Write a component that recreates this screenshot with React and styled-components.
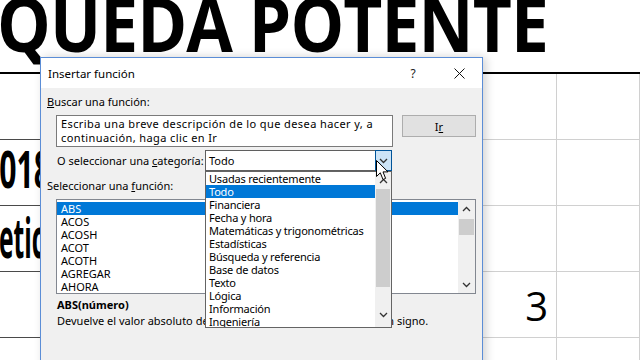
import React from "react";
import styled, { createGlobalStyle } from "styled-components";

const GlobalStyle = createGlobalStyle`
  html, body {
    margin: 0;
    padding: 0;
    background: #fff;
  }
  body {
    width: 640px;
    height: 360px;
    overflow: hidden;
    font-family: "Noto Sans", "Open Sans", sans-serif;
  }
`;

const categories = [
  "Usadas recientemente",
  "Todo",
  "Financiera",
  "Fecha y hora",
  "Matemáticas y trigonométricas",
  "Estadísticas",
  "Búsqueda y referencia",
  "Base de datos",
  "Texto",
  "Lógica",
  "Información",
  "Ingeniería",
];

const functions = ["ABS", "ACOS", "ACOSH", "ACOT", "ACOTH", "AGREGAR", "AHORA"];

function Chevron({ up }) {
  return (
    <svg width="9" height="6" viewBox="0 0 9 6">
      <path
        d={up ? "M1 5 L4.5 1.5 L8 5" : "M1 1 L4.5 4.5 L8 1"}
        fill="none"
        stroke="#333"
        strokeWidth="1.3"
      />
    </svg>
  );
}

function App() {
  return (
    <Page>
      <GlobalStyle />
      <Sheet>
        <Banner>
          <BannerText>QUEDA POTENTE</BannerText>
        </Banner>
        <Grid>
          <Cell $dark />
          <Cell />
          <Cell />
          <Cell $dark>
            <BigText $shift={-18} $size={52} $squeeze={0.58} $top={-10}>
              2018
            </BigText>
          </Cell>
          <Cell />
          <Cell />
          <Cell $dark>
            <BigText $shift={-1} $size={56} $squeeze={0.44} $top={-5}>
              etica
            </BigText>
          </Cell>
          <Cell />
          <Cell />
          <Cell $dark />
          <Cell $right>
            <Number>3</Number>
          </Cell>
          <Cell />
          <Cell $dark />
          <Cell />
          <Cell />
        </Grid>
      </Sheet>

      <Dialog>
        <TitleBar>
          <TitleText>Insertar función</TitleText>
          <HelpButton>?</HelpButton>
          <CloseButton>
            <svg width="11" height="11" viewBox="0 0 11 11">
              <path d="M0.5 0.5 L10.5 10.5 M10.5 0.5 L0.5 10.5" stroke="#111" strokeWidth="1" />
            </svg>
          </CloseButton>
        </TitleBar>

        <Body>
          <Label>
            <u>B</u>uscar una función:
          </Label>
          <SearchRow>
            <SearchBox>
              Escriba una breve descripción de lo que desea hacer y, a
              <br />
              continuación, haga clic en Ir
            </SearchBox>
            <GoButton>
              I<u>r</u>
            </GoButton>
          </SearchRow>

          <CategoryRow>
            <CategoryLabel>
              O seleccionar una <u>c</u>ategoría:
            </CategoryLabel>
            <Combo>
              <ComboValue>Todo</ComboValue>
              <ComboArrow>
                <Chevron />
              </ComboArrow>
            </Combo>
          </CategoryRow>

          <Label $top={7}>
            Seleccionar una <u>f</u>unción:
          </Label>
          <FunctionList>
            <Rows $padTop={2}>
              {functions.map((f, i) => (
                <Row key={f} $selected={i === 0}>
                  {f}
                </Row>
              ))}
            </Rows>
            <ScrollBar $width={17}>
              <ScrollArrow>
                <Chevron up />
              </ScrollArrow>
              <Thumb $top={2} $height={16} />
              <ScrollSpacer />
              <ScrollArrow>
                <Chevron />
              </ScrollArrow>
            </ScrollBar>
          </FunctionList>

          <Syntax>ABS(número)</Syntax>
          <Description>
            Devuelve el valor absoluto de un número, es decir, un número sin signo.
          </Description>
        </Body>

        <DropList>
          <Rows $padTop={0}>
            {categories.map((c, i) => (
              <Row key={c} $selected={i === 1} $pad={3} $tight>
                {c}
              </Row>
            ))}
          </Rows>
          <ScrollBar $width={16}>
            <ScrollArrow>
              <Chevron up />
            </ScrollArrow>
            <Thumb $top={0} $height={98} />
            <ScrollSpacer />
            <ScrollArrow $bottom={4}>
              <Chevron />
            </ScrollArrow>
          </ScrollBar>
        </DropList>

        <Cursor width="13" height="21" viewBox="0 0 13 21">
          <path
            d="M0.5 0.5 L0.5 16.5 L4.3 12.8 L7 19.5 L9.6 18.4 L7 11.9 L12 11.9 Z"
            fill="#fff"
            stroke="#000"
            strokeWidth="1"
          />
        </Cursor>
      </Dialog>
    </Page>
  );
}

const Page = styled.div`
  position: relative;
  width: 640px;
  height: 360px;
  overflow: hidden;
  background: #fff;
`;

const Sheet = styled.div`
  width: 640px;
`;

const Banner = styled.div`
  height: 72px;
  border-bottom: 2px solid #000;
  overflow: hidden;
`;

const BannerText = styled.div`
  font-family: "Open Sans", sans-serif;
  font-weight: 700;
  font-size: 76px;
  line-height: 76px;
  margin-top: -15px;
  margin-left: -3px;
  white-space: nowrap;
  color: #000;
  letter-spacing: -1px;
  transform: scaleX(0.89);
  transform-origin: left center;
`;

const Grid = styled.div`
  display: grid;
  grid-template-columns: 300px 257px 83px;
  grid-auto-rows: 66px;
`;

const Cell = styled.div`
  box-sizing: border-box;
  border-bottom: 1px solid ${(p) => (p.$dark ? "#4a4a4a" : "#d0d0d0")};
  border-right: 1px solid #d0d0d0;
  overflow: hidden;
  display: flex;
  align-items: center;
  justify-content: ${(p) => (p.$right ? "flex-end" : "flex-start")};
  padding-right: ${(p) => (p.$right ? "8px" : "0")};
`;

const BigText = styled.div`
  font-family: "Open Sans", sans-serif;
  font-weight: 700;
  font-size: ${(p) => p.$size}px;
  line-height: ${(p) => p.$size}px;
  white-space: nowrap;
  margin-left: ${(p) => p.$shift}px;
  margin-top: ${(p) => p.$top}px;
  transform: scaleX(${(p) => p.$squeeze});
  transform-origin: left center;
`;

const Number = styled.div`
  font-family: "Open Sans", sans-serif;
  font-size: 40px;
  line-height: 40px;
  margin-top: 2px;
  color: #000;
`;

const Dialog = styled.div`
  position: absolute;
  left: 40px;
  top: 57px;
  width: 443px;
  height: 320px;
  box-sizing: border-box;
  border: 1px solid #5b8dd6;
  background: #f0f0f0;
  box-shadow: 3px 0 9px rgba(0, 0, 0, 0.18);
  font-family: "Noto Sans", "Open Sans", sans-serif;
  font-size: 11px;
  color: #000;
`;

const TitleBar = styled.div`
  height: 30px;
  background: #fff;
  display: flex;
  align-items: center;
  padding: 0 5px 0 7px;
`;

const TitleText = styled.div`
  flex: 1;
  font-size: 11.5px;
`;

const HelpButton = styled.div`
  width: 30px;
  text-align: center;
  font-size: 12px;
  color: #222;
  margin-right: 13px;
`;

const CloseButton = styled.div`
  width: 36px;
  display: flex;
  justify-content: center;
  align-items: center;
`;

const Body = styled.div`
  padding: 0 6px;
`;

const Label = styled.div`
  line-height: 16px;
  margin-top: ${(p) => p.$top ?? 6}px;
  white-space: nowrap;
`;

const SearchRow = styled.div`
  display: flex;
  align-items: flex-start;
  gap: 9px;
  margin-top: 5px;
  padding-left: 9px;
`;

const SearchBox = styled.div`
  box-sizing: border-box;
  width: 337px;
  height: 32px;
  background: #fff;
  border: 1px solid #7a7a7a;
  padding: 1px 4px;
  line-height: 14px;
  letter-spacing: 0.4px;
  white-space: nowrap;
  overflow: hidden;
`;

const GoButton = styled.div`
  box-sizing: border-box;
  width: 74px;
  height: 22px;
  background: #e1e1e1;
  border: 1px solid #adadad;
  display: flex;
  align-items: center;
  justify-content: center;
`;

const CategoryRow = styled.div`
  display: flex;
  align-items: center;
  margin-top: 3px;
  padding: 0 84px 0 10px;
  height: 21px;
`;

const CategoryLabel = styled.div`
  flex: 1;
  white-space: nowrap;
`;

const Combo = styled.div`
  box-sizing: border-box;
  width: 187px;
  height: 21px;
  background: #fff;
  border: 1px solid #5f5f5f;
  display: flex;
  align-items: stretch;
`;

const ComboValue = styled.div`
  flex: 1;
  padding-left: 3px;
  display: flex;
  align-items: center;
`;

const ComboArrow = styled.div`
  box-sizing: border-box;
  width: 17px;
  margin: -1px -1px -1px 0;
  background: #cce4f7;
  border: 1px solid #005499;
  display: flex;
  align-items: center;
  justify-content: center;
`;

const FunctionList = styled.div`
  box-sizing: border-box;
  width: 420px;
  height: 95px;
  margin: 5px 0 0 9px;
  background: #fff;
  border: 1px solid #828790;
  display: flex;
`;

const Rows = styled.div`
  flex: 1;
  padding-top: ${(p) => p.$padTop}px;
  overflow: hidden;
`;

const Row = styled.div`
  height: 13px;
  line-height: 13px;
  padding-left: ${(p) => p.$pad ?? 4}px;
  white-space: nowrap;
  letter-spacing: ${(p) => (p.$tight ? "-0.2px" : "0")};
  background: ${(p) => (p.$selected ? "#0078d7" : "transparent")};
  color: ${(p) => (p.$selected ? "#fff" : "#000")};
`;

const ScrollBar = styled.div`
  width: ${(p) => p.$width}px;
  background: #f0f0f0;
  display: flex;
  flex-direction: column;
`;

const ScrollArrow = styled.div`
  height: 17px;
  display: flex;
  align-items: center;
  justify-content: center;
  margin-bottom: ${(p) => p.$bottom ?? 0}px;
`;

const Thumb = styled.div`
  margin: ${(p) => p.$top}px 1px 0;
  height: ${(p) => p.$height}px;
  background: #cdcdcd;
`;

const ScrollSpacer = styled.div`
  flex: 1;
`;

const Syntax = styled.div`
  font-weight: 700;
  line-height: 16px;
  margin-top: 3px;
  padding-left: 10px;
`;

const Description = styled.div`
  line-height: 16px;
  padding-left: 10px;
  white-space: nowrap;
`;

const DropList = styled.div`
  position: absolute;
  left: 164px;
  top: 113px;
  width: 187px;
  height: 157px;
  box-sizing: border-box;
  background: #fff;
  border: 1px solid #646464;
  display: flex;
`;

const Cursor = styled.svg`
  position: absolute;
  left: 335px;
  top: 102px;
`;

export default App;
